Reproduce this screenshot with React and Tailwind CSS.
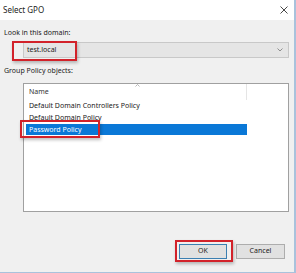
export default function App() {
  const font = { fontFamily: '"Segoe UI", "Noto Sans", "Open Sans", sans-serif' };
  return (
    <div
      className="relative w-[296px] h-[273px] overflow-hidden bg-[#f0f0f0] text-[7px] text-[#1a1a1a] border-r-2 border-b border-[#a9c2dc]"
      style={font}
    >
      {/* Barra del titolo */}
      <div className="h-[20px] bg-white flex items-center justify-between pl-[3px] pr-[6px]">
        <span className="text-[8px] text-[#222]">Select GPO</span>
        <svg width="8" height="8" viewBox="0 0 8 8" className="mr-[0px]">
          <path d="M0.5 0.5 L7.5 7.5 M7.5 0.5 L0.5 7.5" stroke="#333" strokeWidth="0.9" />
        </svg>
      </div>

      {/* Corpo */}
      <div className="pl-[4px] pr-[5px]">
        <div className="mt-[7px] h-[12px] leading-[12px]">Look in this domain:</div>

        <div className="mt-[3px] ml-[19px] w-[266px] h-[16px] bg-[#e5e5e5] border border-[#c8c8c8] flex items-center justify-between pl-[3px] pr-[5px]">
          <span>test.local</span>
          <svg width="6" height="4" viewBox="0 0 6 4">
            <path d="M0.5 0.5 L3 3 L5.5 0.5" fill="none" stroke="#777" strokeWidth="0.8" />
          </svg>
        </div>

        <div className="mt-[7px] h-[12px] leading-[12px]">Group Policy objects:</div>

        {/* Lista GPO */}
        <div className="mt-[6px] ml-[19px] w-[266px] h-[129px] bg-white border border-[#a0a0a0] pl-[2px] pt-0">
          <div className="relative h-[16px] w-[221px] flex items-center border-r border-[#e5e5e5] pl-[3px]">
            <span className="text-[#333]">Name</span>
            <svg width="5" height="3" viewBox="0 0 5 3" className="absolute left-[109px] top-[0px]">
              <path d="M0.5 2.5 L2.5 0.5 L4.5 2.5" fill="none" stroke="#999" strokeWidth="0.7" />
            </svg>
          </div>
          <div className="w-[221px] h-[12px] leading-[12px] pl-[3px]">Default Domain Controllers Policy</div>
          <div className="w-[221px] h-[12px] leading-[12px] pl-[3px]">Default Domain Policy</div>
          <div className="w-[221px] h-[11px] leading-[11px] pl-[3px] bg-[#0a78d7] text-white">Password Policy</div>
        </div>

        {/* Pulsanti */}
        <div className="mt-[32px] flex justify-end gap-[9px] pr-[4px]">
          <button className="w-[48px] h-[15px] bg-[#e1e1e1] border border-[#3c7fb1] text-[7px] text-[#222]">OK</button>
          <button className="w-[49px] h-[15px] bg-[#e1e1e1] border border-[#adadad] text-[7px] text-[#222]">Cancel</button>
        </div>
      </div>

      {/* Riquadri rossi di evidenziazione */}
      <div className="absolute left-[12px] top-[41px] w-[65px] h-[20px] border-[2.5px] border-[#d2222a] shadow-[1px_2px_3px_rgba(0,0,0,0.25)]" />
      <div className="absolute left-[20px] top-[120px] w-[80px] h-[18px] border-[2.5px] border-[#d2222a] shadow-[1px_2px_3px_rgba(0,0,0,0.25)]" />
      <div className="absolute left-[175px] top-[240px] w-[58px] h-[22px] border-[2.5px] border-[#d2222a] shadow-[1px_2px_3px_rgba(0,0,0,0.25)]" />
    </div>
  );
}
